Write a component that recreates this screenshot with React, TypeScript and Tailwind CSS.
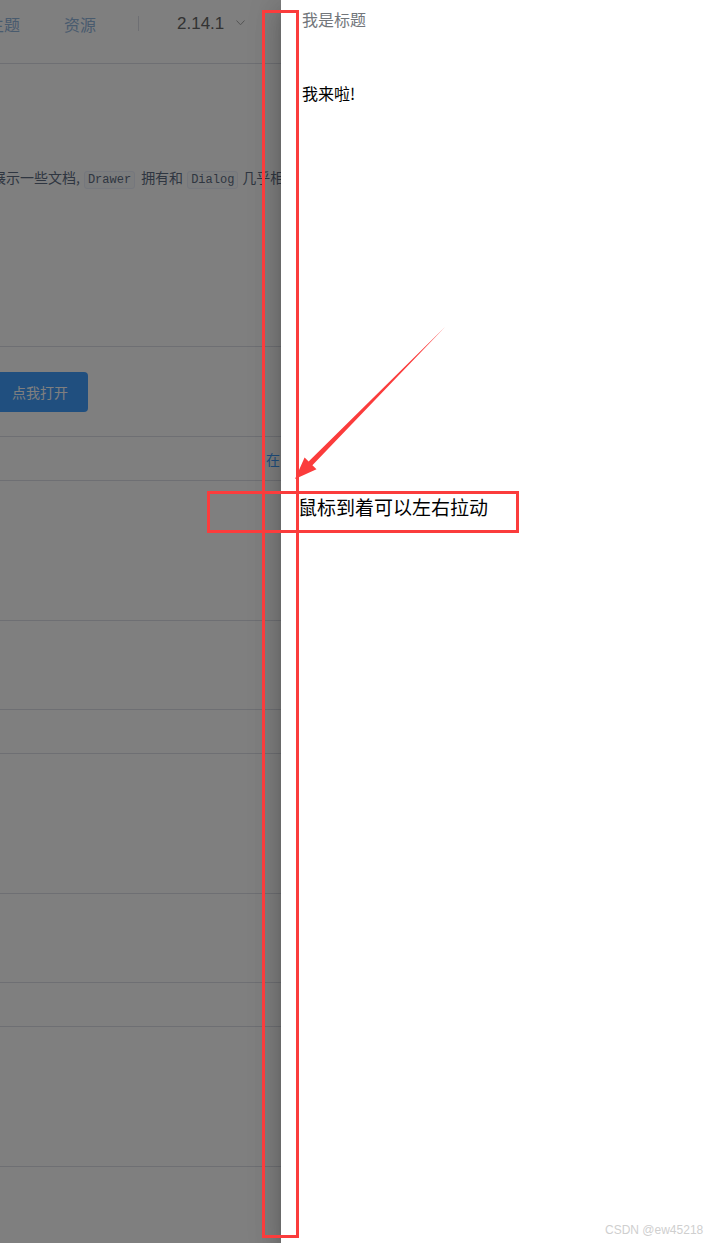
import React from "react";

const cjk = "font-['Noto_Sans_CJK_SC',sans-serif]";

const rowHeights = [140, 89, 44, 140, 89, 44, 140];

const Code = ({children, className = ""}: {children: React.ReactNode; className?: string}) => (
  <code
    className={`inline-block rounded-[3px] border border-[#eaeefb] bg-[#f9fafc] px-[3px] font-['Liberation_Mono',monospace] text-[12px] leading-[16px] text-[#5e6d82] ${className}`}>
    {children}
  </code>
);

const DocPage = () => {
  return (
    <div className={`w-full bg-white ${cjk}`}>
      {/* header */}
      <div className="flex h-[64px] items-start border-b border-[#dcdfe6] pt-[14px] text-[16px] leading-[20px]">
        <span className="-ml-[12px] text-[#93b6dd]">主题</span>
        <span className="ml-[44px] text-[#93b6dd]">资源</span>
        <span className="ml-[42px] mt-[2px] h-[15px] w-px bg-[#dcdfe6]" />
        <span className="ml-[38px] font-['Liberation_Sans',sans-serif] text-[17px] text-[#666]">2.14.1</span>
        <svg className="ml-[12px] mt-[6px]" width="9" height="6" viewBox="0 0 9 6">
          <path d="M0.5 0.5 L4.5 4.8 L8.5 0.5" fill="none" stroke="#aaa" strokeWidth="1" />
        </svg>
      </div>

      {/* intro */}
      <div className="h-[283px] border-b border-[#dcdfe6] pt-[102px]">
        <p className="-ml-[8px] whitespace-nowrap text-[14px] leading-[22px] text-[#5e6d82]">
          展示一些文档,
          <Code className="ml-[4px] mr-[6px]">Drawer</Code>
          拥有和
          <Code className="ml-[4px] mr-[4px]">Dialog</Code>
          几乎相同的 API, 在 UI 上带来不一样的体验.
        </p>
      </div>

      {/* demo */}
      <div className="h-[90px] border-b border-[#dcdfe6] pt-[25px]">
        <button className="-ml-[8px] h-[40px] w-[96px] rounded-[4px] bg-[#409eff] text-[14px] text-white">
          点我打开
        </button>
      </div>

      <div className="h-[44px] border-b border-[#dcdfe6] pl-[266px] pt-[11px] text-[14px] leading-[22px] text-[#409eff]">
        在 Vue 中使用
      </div>

      {rowHeights.map((h, i) => (
        <div key={i} className="border-b border-[#dcdfe6]" style={{height: h}} />
      ))}
      <div className="h-[80px]" />
    </div>
  );
};

const Drawer = () => {
  return (
    <div
      className={`absolute bottom-0 left-[281px] right-0 top-0 bg-white pl-[21px] pt-[7px] shadow-[0_8px_10px_-5px_rgba(0,0,0,0.2),0_16px_24px_2px_rgba(0,0,0,0.14),0_6px_30px_5px_rgba(0,0,0,0.12)] ${cjk}`}>
      <div className="text-[16px] leading-[24px] text-[#72767b]">我是标题</div>
      <div className="mt-[50px] text-[16px] leading-[24px] text-black">我来啦!</div>
    </div>
  );
};

const Annotations = () => {
  return (
    <>
      <div className="absolute left-[262px] top-[10px] h-[1228px] w-[37px] border-[3px] border-[#fb3c3c]" />
      <div className="absolute left-[207px] top-[491px] h-[42px] w-[312px] border-[3px] border-[#fb3c3c]" />
      <div className={`absolute left-[298px] top-[497px] text-[19px] leading-[19px] text-black ${cjk}`}>
        鼠标到着可以左右拉动
      </div>
      <svg className="pointer-events-none absolute left-0 top-0" width="717" height="1243">
        <polygon
          points="445,327 312.4,465.3 316.5,469.3 295,479 304.6,457.6 308.6,461.5"
          fill="#fb3c3c"
        />
      </svg>
      <div className="absolute left-[605px] top-[1222px] font-['Liberation_Sans',sans-serif] text-[12px] leading-[16px] text-[#cfcfcf]">
        CSDN @ew45218
      </div>
    </>
  );
};

const App = () => {
  return (
    <div className="relative h-[1243px] w-[717px] overflow-hidden bg-white">
      <DocPage />
      <div className="absolute inset-0 bg-black/50" />
      <Drawer />
      <Annotations />
    </div>
  );
};

export default App;
